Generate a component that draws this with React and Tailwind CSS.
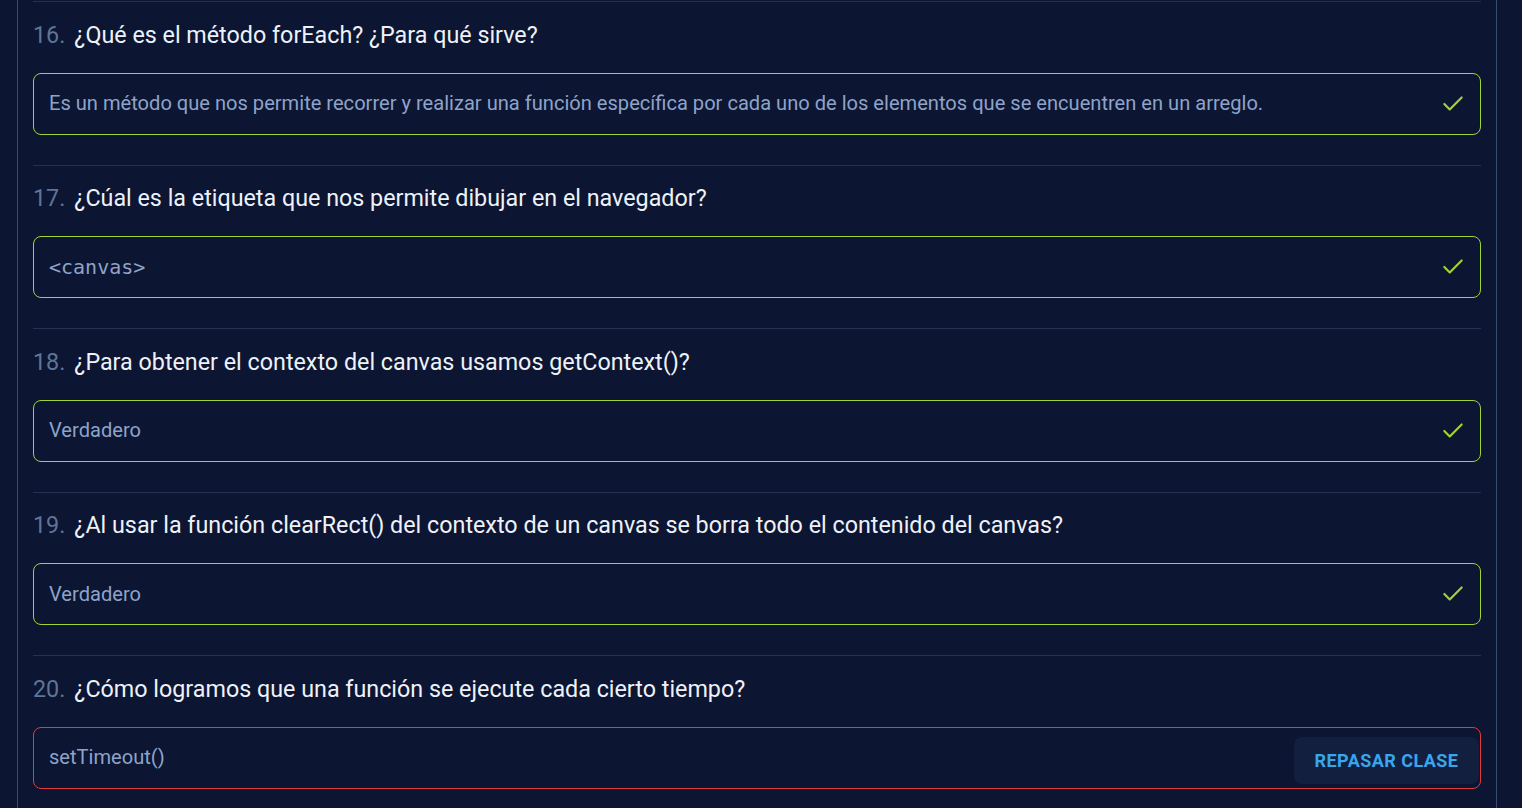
import React from "react";
import { Check } from "lucide-react";

const items = [
  {
    n: "16.",
    q: "¿Qué es el método forEach? ¿Para qué sirve?",
    a: "Es un método que nos permite recorrer y realizar una función específica por cada uno de los elementos que se encuentren en un arreglo.",
    ok: true,
  },
  { n: "17.", q: "¿Cúal es la etiqueta que nos permite dibujar en el navegador?", a: "<canvas>", ok: true, mono: true },
  { n: "18.", q: "¿Para obtener el contexto del canvas usamos getContext()?", a: "Verdadero", ok: true },
  {
    n: "19.",
    q: "¿Al usar la función clearRect() del contexto de un canvas se borra todo el contenido del canvas?",
    a: "Verdadero",
    ok: true,
  },
  { n: "20.", q: "¿Cómo logramos que una función se ejecute cada cierto tiempo?", a: "setTimeout()", ok: false },
];

export default function App() {
  return (
    <div className="min-h-[808px] w-full bg-[#0c1531] overflow-hidden" style={{ fontFamily: "Roboto, 'Liberation Sans', sans-serif" }}>
      <div className="ml-[17px] w-[1480px] min-h-[808px] border-x border-[#3a4b70] px-[15px] pt-[1px]">
        {items.map((it, i) => (
          <div key={i} className="border-t border-[#243152] pt-[18.5px] pb-[30px]">
            <div className="text-[23.3px] leading-[29.5px] text-[#eef2f8]">
              <span className="mr-[9px] text-[#5f7497]">{it.n}</span>
              {it.q}
            </div>
            <div
              className={
                "mt-[22.5px] h-[62px] rounded-lg border flex items-center justify-between pl-[15px] " +
                (it.ok ? "border-[#a2d336] pr-[14px]" : "border-[#e23a3a] pr-[1px]")
              }
            >
              <span
                className="text-[20.1px] text-[#8ea3c9]"
                style={it.mono ? { fontFamily: "'DejaVu Sans Mono', monospace", fontSize: "20px" } : undefined}
              >
                {it.a}
              </span>
              {it.ok ? (
                <Check size={26} strokeWidth={2} className="text-[#a2d336]" />
              ) : (
                <button className="self-end mb-[4px] h-[47px] w-[185px] rounded-lg bg-[#131f3e] text-[18px] font-bold tracking-wide text-[#38a6ec]">
                  REPASAR CLASE
                </button>
              )}
            </div>
          </div>
        ))}
      </div>
    </div>
  );
}
